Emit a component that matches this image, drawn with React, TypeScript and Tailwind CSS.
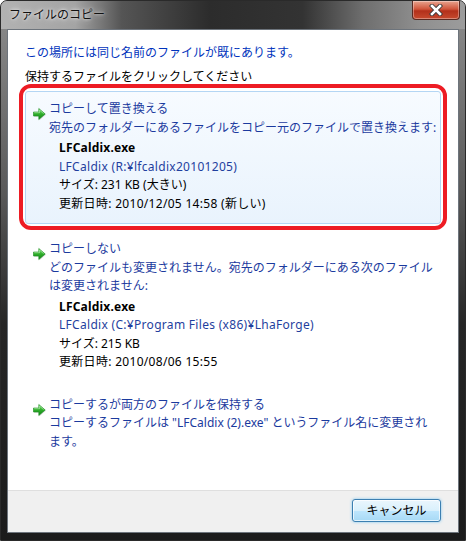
import React from "react"

const jp = { fontFamily: '"Noto Sans", "Noto Sans CJK JP", sans-serif' }

function GreenArrow() {
  return (
    <svg width="15" height="14" viewBox="0 0 15 14" className="shrink-0">
      <defs>
        <linearGradient id="ga" x1="0" y1="0" x2="0" y2="1">
          <stop offset="0" stopColor="#6fd96a" />
          <stop offset="0.5" stopColor="#2fae2a" />
          <stop offset="1" stopColor="#14821a" />
        </linearGradient>
      </defs>
      <path d="M1.5 5 H6.8 V1.5 L13.2 7 L6.8 12.5 V9 H1.5 Z" fill="#bdbdbd" opacity="0.55" transform="translate(0.7 0.8)" />
      <path d="M1.5 5 H6.8 V1.5 L13.2 7 L6.8 12.5 V9 H1.5 Z" fill="url(#ga)" stroke="#178a1c" strokeWidth="0.6" />
      <path d="M2.2 5.7 H7.5 V3 L11.6 6.6" fill="none" stroke="#c9f5c4" strokeWidth="0.7" opacity="0.8" />
    </svg>
  )
}

function FileInfo({ path, size, date }: { path: string; size: string; date: string }) {
  return (
    <div className="mt-[2px] pl-[10px] leading-[18.5px]">
      <div className="font-bold tracking-[0.2px] text-black">LFCaldix.exe</div>
      <div className="tracking-[0.3px] text-[#1f3f9e]">{path}</div>
      <div className="text-black">{size}</div>
      <div className="tracking-[0.3px] text-black">{date}</div>
    </div>
  )
}

function Option({
  title,
  children,
  highlight,
}: {
  title: string
  children: React.ReactNode
  highlight?: boolean
}) {
  return (
    <div
      className={
        "flex rounded-[3px] border pl-[6px] pr-[2px] pt-[8px] pb-[10px] " +
        (highlight
          ? "border-[#b4d6f4] bg-[linear-gradient(to_bottom,#f7fbff,#e9f3fd)]"
          : "border-transparent")
      }
    >
      <div className="w-[16px] pt-[7px]">
        <GreenArrow />
      </div>
      <div className="flex-1 pl-[1px] leading-[18.5px]">
        <div className="text-[#1b3a9e]">{title}</div>
        {children}
      </div>
    </div>
  )
}

export default function App() {
  return (
    <div
      className="relative flex h-[541px] w-[466px] flex-col overflow-hidden rounded-t-[7px] border border-[#2a2a2a] bg-[linear-gradient(to_bottom,#8e8e8e,#5a5a5a_35%,#262626_60%,#1b1b1b)] text-[12px]"
      style={jp}
    >
      {/* Title bar */}
      <div className="flex h-[28px] shrink-0 items-start justify-between bg-[linear-gradient(to_right,#b2b2b2,#a4a4a4_16%,#555_26%,#2c2c2c_45%,#333_65%,#6e6e6e_78%,#8f8f8f_90%,#9c9c9c)]">
        <div className="pl-[8px] pt-[5px] text-[12px] leading-[18px] text-[#111] [text-shadow:0_0_6px_rgba(255,255,255,0.9),0_0_3px_rgba(255,255,255,0.8)]">
          ファイルのコピー
        </div>
        <div className="mr-[5px] flex h-[19px] w-[48px] items-center justify-center rounded-b-[4px] border border-t-0 border-[#5a2a22] bg-[linear-gradient(to_bottom,#e8a48f,#d0553b_45%,#b3301b_55%,#c64a2e)] shadow-[inset_0_0_0_1px_rgba(255,255,255,0.35)]">
          <svg width="14" height="12" viewBox="0 0 14 12">
            <path d="M3 2 L11 10 M11 2 L3 10" stroke="#3a3a3a" strokeWidth="4.4" strokeLinecap="square" />
            <path d="M3 2 L11 10 M11 2 L3 10" stroke="#fff" strokeWidth="2.6" strokeLinecap="square" />
          </svg>
        </div>
      </div>

      {/* Client area */}
      <div className="flex flex-1 px-[6px] pb-[7px]">
        <div className="flex flex-1 flex-col border border-[#6d747c] bg-white">
          <div className="flex-1 px-[17px] pt-[14px]">
            <div className="leading-[18px] text-[#0033bc]">この場所には同じ名前のファイルが既にあります。</div>
            <div className="mt-[6px] leading-[18px] text-black">保持するファイルをクリックしてください</div>

            <div className="relative mt-[5px]">
              <Option title="コピーして置き換える" highlight>
                <div className="text-[#1b3a9e]">宛先のフォルダーにあるファイルをコピー元のファイルで置き換えます:</div>
                <FileInfo
                  path="LFCaldix (R:¥lfcaldix20101205)"
                  size="サイズ: 231 KB (大きい)"
                  date="更新日時: 2010/12/05 14:58 (新しい)"
                />
              </Option>
              {/* red annotation frame */}
              <div className="pointer-events-none absolute -top-[7px] -bottom-[6px] -left-[6px] -right-[6px] rounded-[12px] border-[4px] border-[#ed1c24]" />
            </div>

            <div className="mt-[7px]">
              <Option title="コピーしない">
                <div className="text-[#1b3a9e]">
                  どのファイルも変更されません。宛先のフォルダーにある次のファイル
                  <br />
                  は変更されません:
                </div>
                <FileInfo
                  path="LFCaldix (C:¥Program Files (x86)¥LhaForge)"
                  size="サイズ: 215 KB"
                  date="更新日時: 2010/08/06 15:55"
                />
              </Option>
            </div>

            <div className="mt-[4px]">
              <Option title="コピーするが両方のファイルを保持する">
                <div className="text-[#1b3a9e]">
                  コピーするファイルは "LFCaldix (2).exe" というファイル名に変更され
                  <br />
                  ます。
                </div>
              </Option>
            </div>
          </div>

          {/* Footer */}
          <div className="flex h-[42px] shrink-0 items-start justify-end border-t border-[#dfdfdf] bg-[#f0f0f0] pr-[17px] pt-[8px]">
            <button className="flex h-[23px] w-[89px] items-center justify-center rounded-[3px] border border-[#3c7fb1] bg-[linear-gradient(to_bottom,#eaf6fd,#d9f0fc_50%,#bee6fd_51%,#a7d9f5)] text-[12px] text-black shadow-[inset_0_0_0_1px_rgba(255,255,255,0.7),0_0_3px_#7ec5f0]">
              キャンセル
            </button>
          </div>
        </div>
      </div>
    </div>
  )
}
